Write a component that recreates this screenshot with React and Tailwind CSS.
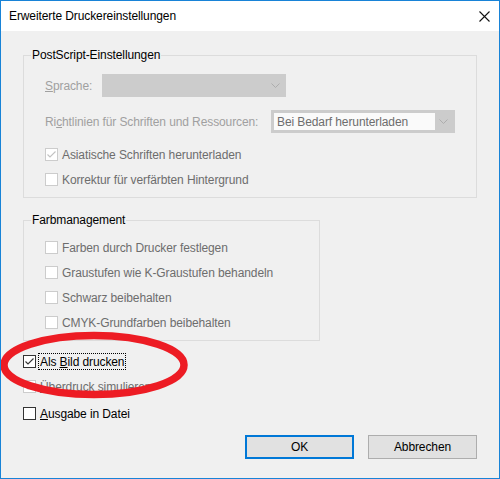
import clsx from 'clsx'

function Box({ checked, disabled }) {
  return (
    <span
      className={clsx(
        'w-[13px] h-[13px] border bg-white flex items-center justify-center shrink-0',
        disabled ? 'border-[#cccccc]' : 'border-[#333333]'
      )}
    >
      {checked && (
        <svg width="11" height="11" viewBox="0 0 11 11">
          <path
            d="M1.5 5.5 L4 8 L9.5 2.5"
            fill="none"
            stroke={disabled ? '#c2c2c2' : '#333333'}
            strokeWidth="1.1"
          />
        </svg>
      )}
    </span>
  )
}

function Check({ children, checked, disabled, focus, className }) {
  return (
    <div className={clsx('flex items-center h-[17px]', className)}>
      <Box checked={checked} disabled={disabled} />
      {focus ? (
        <span className="ml-[2px] h-[17px] px-px border border-dotted border-black flex items-center text-black">
          <span>{children}</span>
        </span>
      ) : (
        <span className={clsx('ml-[4px]', disabled ? 'text-[#6d6d6d]' : 'text-black')}>
          {children}
        </span>
      )}
    </div>
  )
}

function Chevron({ color }) {
  return (
    <svg width="9" height="5" viewBox="0 0 9 5">
      <path d="M0.5 0.5 L4.5 4.5 L8.5 0.5" fill="none" stroke={color} strokeWidth="1" />
    </svg>
  )
}

function Group({ title, className, children }) {
  return (
    <fieldset className={clsx('border border-[#dcdcdc] pl-[7px] pb-[9px]', className)}>
      <legend className="px-px h-[16px] leading-[16px] text-black">{title}</legend>
      <div className="pl-[14px]">{children}</div>
    </fieldset>
  )
}

export default function App() {
  return (
    <div className="relative w-[500px] h-[479px] border border-[#1883d7] bg-[#f0f0f0] text-[12px] leading-[16px] tracking-[-0.1px] font-['Liberation_Sans',Arial,sans-serif] overflow-hidden">
      <div className="h-[30px] bg-white flex items-center justify-between pl-[8px] pr-[9px]">
        <span className="text-black">Erweiterte Druckereinstellungen</span>
        <svg width="11" height="11" viewBox="0 0 11 11">
          <path d="M0.5 0.5 L10.5 10.5 M10.5 0.5 L0.5 10.5" stroke="#111" strokeWidth="1.1" />
        </svg>
      </div>

      <div className="px-[22px] pt-[16px]">
        <Group title="PostScript-Einstellungen">
          <div className="mt-[11px] flex items-center h-[23px]">
            <span className="w-[57px] text-[#a0a0a0]">
              <u>S</u>prache:
            </span>
            <div className="w-[184px] h-[23px] bg-[#cccccc] flex items-center justify-end pr-[6px]">
              <Chevron color="#adadad" />
            </div>
          </div>
          <div className="mt-[13px] flex items-center h-[23px]">
            <span className="w-[226px] text-[#a0a0a0]">
              Ri<u>c</u>htlinien für Schriften und Ressourcen:
            </span>
            <div className="w-[184px] h-[23px] bg-[#cccccc] flex items-center p-[3px]">
              <div className="w-[161px] h-[17px] bg-[#fafafa] flex items-center pl-[3px] text-[#6d6d6d]">
                Bei Bedarf herunterladen
              </div>
              <div className="flex-1 flex justify-center">
                <Chevron color="#adadad" />
              </div>
            </div>
          </div>
          <Check checked disabled className="mt-[13px]">
            Asiatische Schriften herunterladen
          </Check>
          <Check disabled className="mt-[8px]">
            Korrektur für verfärbten Hintergrund
          </Check>
        </Group>

        <Group title="Farbmanagement" className="mt-[14px] w-[297px]">
          <Check disabled className="mt-[11px]">
            Farben durch Drucker festlegen
          </Check>
          <Check disabled className="mt-[8px]">
            Graustufen wie K-Graustufen behandeln
          </Check>
          <Check disabled className="mt-[8px]">
            Schwarz beibehalten
          </Check>
          <Check disabled className="mt-[8px]">
            CMYK-Grundfarben beibehalten
          </Check>
        </Group>

        <Check checked focus className="mt-[12px]">
          Als <u>B</u>ild drucken
        </Check>
        <Check checked disabled className="mt-[8px]">
          <u>Ü</u>berdruck simulieren
        </Check>
        <Check className="mt-[10px]">
          <u>A</u>usgabe in Datei
        </Check>

        <div className="mt-[13px] flex justify-end gap-[14px]">
          <button className="w-[109px] h-[24px] border-2 border-[#0078d7] bg-[#e1e1e1] text-black">
            OK
          </button>
          <button className="w-[109px] h-[24px] border border-[#adadad] bg-[#e1e1e1] text-black">
            Abbrechen
          </button>
        </div>
      </div>

      <svg
        className="absolute left-[-1px] top-[-1px] pointer-events-none"
        width="500"
        height="479"
        viewBox="0 0 500 479"
      >
        <ellipse cx="94" cy="365" rx="90" ry="29.5" fill="none" stroke="#ed1c24" strokeWidth="7.5" />
      </svg>
    </div>
  )
}
